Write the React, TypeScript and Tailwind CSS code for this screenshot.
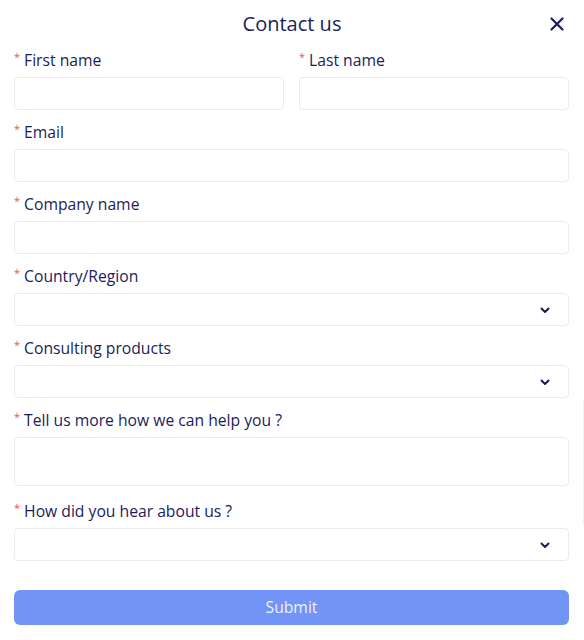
import React from "react";

const font = { fontFamily: '"Open Sans", "Noto Sans", sans-serif' };

function Label({ text }: { text: string }) {
  return (
    <div className="flex h-5 items-center text-[15.7px] leading-5 text-[#1b1c5c]">
      <span className="mr-[4px] self-start pt-[1px] text-[11px] leading-3 text-[#f0524c]">*</span>
      <span>{text}</span>
    </div>
  );
}

function Chevron() {
  return (
    <svg width="12" height="12" viewBox="0 0 12 12" fill="none">
      <path d="M2.5 4.5 L6 8 L9.5 4.5" stroke="#1b1c5c" strokeWidth="2" strokeLinecap="round" strokeLinejoin="round" />
    </svg>
  );
}

function Input() {
  return <div className="h-[33px] rounded-[4px] border border-[#ebebeb] bg-white" />;
}

function Select() {
  return (
    <div className="flex h-[33px] items-center justify-end rounded-[4px] border border-[#ebebeb] bg-white pr-[17px]">
      <Chevron />
    </div>
  );
}

function Field({ label, children }: { label: string; children: React.ReactNode }) {
  return (
    <div className="flex flex-col gap-[7px]">
      <Label text={label} />
      {children}
    </div>
  );
}

export default function App() {
  return (
    <div className="relative h-[640px] w-[584px] overflow-hidden bg-white" style={font}>
      <div className="absolute right-0 top-[400px] h-[125px] w-px bg-[#f0f0f0]" />
      <div className="relative flex h-[48px] items-center justify-center">
        <h1 className="text-[20px] text-[#1b1c5c]">Contact us</h1>
        <button className="absolute right-[18px] top-[15px] flex h-[18px] w-[18px] items-center justify-center">
          <svg width="14" height="14" viewBox="0 0 14 14" fill="none">
            <path d="M1.5 1.5 L12.5 12.5 M12.5 1.5 L1.5 12.5" stroke="#1b1c5c" strokeWidth="2.2" strokeLinecap="round" />
          </svg>
        </button>
      </div>
      <div className="flex flex-col gap-[12px] px-[14px] pr-[15px] pt-[2px]">
        <div className="grid grid-cols-2 gap-[15px]">
          <Field label="First name"><Input /></Field>
          <Field label="Last name"><Input /></Field>
        </div>
        <Field label="Email"><Input /></Field>
        <Field label="Company name"><Input /></Field>
        <Field label="Country/Region"><Select /></Field>
        <Field label="Consulting products"><Select /></Field>
        <Field label="Tell us more how we can help you ?">
          <div className="mb-[3px] h-[49px] rounded-[4px] border border-[#ebebeb] bg-white" />
        </Field>
        <Field label="How did you hear about us ?"><Select /></Field>
        <button className="mt-[17px] h-[35px] rounded-[6px] bg-[#7394f7] text-[15.7px] text-[#eef2ff]">Submit</button>
      </div>
    </div>
  );
}
